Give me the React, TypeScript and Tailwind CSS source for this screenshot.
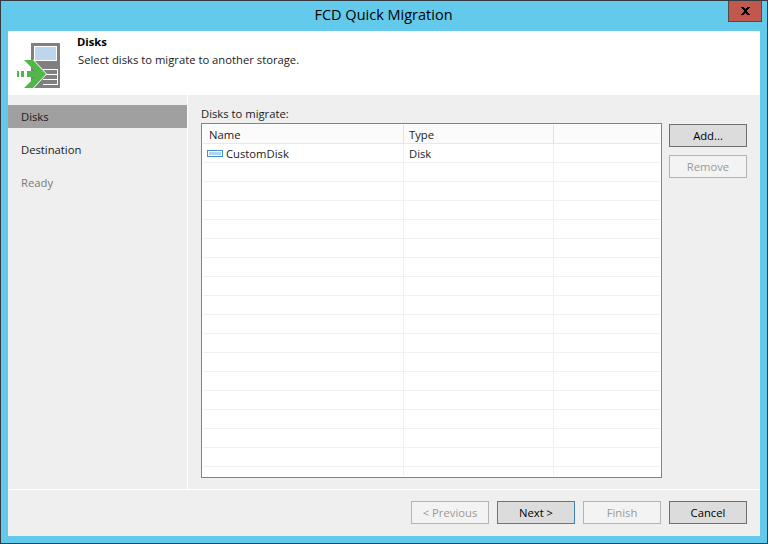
const ROWS = Array.from({ length: 18 });

function WizardIcon() {
  return (
    <svg width="44" height="46" viewBox="0 0 44 46" aria-hidden="true">
      <g shapeRendering="crispEdges">
        <rect x="14" y="0" width="29" height="45" fill="#808080" />
        <rect x="17.5" y="3.5" width="22" height="14" fill="#bdd6ee" stroke="#fff" />
        <path d="M26 26.5h14.5v5h-14.5M26 31.5h14.5v5h-14.5M26 36.5h14.5v5h-14.5" fill="none" stroke="#fff" />
      </g>
      <path d="M16 17 29 31 16 45" fill="none" stroke="#fff" strokeWidth="1.5" />
      <path d="M7 17h9L29 31 16 45H7l11-11h-8v-6h8z" fill="#50b848" />
      <g shapeRendering="crispEdges">
        <rect x="0" y="28" width="2" height="6" fill="#50b848" />
        <rect x="4" y="28" width="3" height="6" fill="#50b848" />
      </g>
    </svg>
  );
}

function DiskIcon() {
  return (
    <svg width="16" height="7" viewBox="0 0 16 7" shapeRendering="crispEdges" aria-hidden="true">
      <rect x="0.5" y="0.5" width="15" height="6" fill="#fff" stroke="#3e93d0" />
      <rect x="2" y="2" width="12" height="3" fill="#b5d3ec" />
    </svg>
  );
}

function CloseIcon() {
  return (
    <svg width="9" height="8" viewBox="0 0 9 8" shapeRendering="crispEdges" aria-hidden="true">
      <path d="M0 0h3v1h1v1h1V1h1V0h3v1H8v1H7v1H6v2h1v1h1v1h1v1H6V7H5V6H4v1H3v1H0V7h1V6h1V5h1V3H2V2H1V1H0z" fill="#000" />
    </svg>
  );
}

function Button({ label, disabled, focused }: { label: string; disabled?: boolean; focused?: boolean }) {
  const tone = disabled
    ? "border-[#b4b4b4] bg-[#f3f3f3] text-[#9a9a9a]"
    : focused
      ? "border-[#3f80b0] bg-[#dcdcdc] text-black"
      : "border-[#707070] bg-[#dcdcdc] text-black";
  return (
    <div className={`flex h-[23px] w-[78px] items-center justify-center border pt-[2px] ${tone}`}>{label}</div>
  );
}

export default function App() {
  return (
    <div
      className="flex h-[544px] w-[768px] flex-col overflow-hidden border border-[#333a40] bg-[#64caec] text-[11.25px] text-[#1a1a1a]"
      style={{ fontFamily: '"Open Sans", "Noto Sans", sans-serif' }}
    >
      <div className="flex h-[30px] shrink-0">
        <div className="flex-1 pl-[38px] pt-[3px] text-center text-[14.5px] leading-[22px] text-black">FCD Quick Migration</div>
        <div className="mr-[5px] flex h-[21px] w-[34px] items-center justify-center border border-t-0 border-[#4c4c4c] bg-[#c0584e]">
          <CloseIcon />
        </div>
      </div>

      <div className="mx-[7px] mb-[7px] flex min-h-0 flex-1 flex-col bg-[#efefef]">
        <div className="flex h-[64px] shrink-0 bg-white pl-[9px] pt-[12px]">
          <WizardIcon />
          <div className="-mt-[10px] ml-[16px]">
            <div className="font-bold leading-[18px] text-black">Disks</div>
            <div className="ml-[1px] leading-[18px]">Select disks to migrate to another storage.</div>
          </div>
        </div>

        <div className="flex min-h-0 flex-1 border-b border-white">
          <div className="w-[180px] shrink-0 border-r border-white pt-[10px]">
            <div className="flex h-[23px] w-[179px] items-center bg-[#a0a0a0] pl-[13px] pt-[2px]">Disks</div>
            <div className="mt-[10px] flex h-[23px] items-center pl-[13px] pt-[2px]">Destination</div>
            <div className="mt-[10px] flex h-[23px] items-center pl-[13px] pt-[2px] text-[#7a7a7a]">Ready</div>
          </div>

          <div className="flex min-w-0 flex-1 pl-[13px] pt-[8px]">
            <div className="w-[461px]">
              <div className="h-[20px] pt-[2px] leading-[18px]">Disks to migrate:</div>
              <div className="h-[355px] border border-[#82828c] bg-white p-[1px]">
                <div className="h-full overflow-hidden">
                  <div className="flex h-[19px] border-b border-[#e8e8e8] bg-[#fbfbfb]">
                    <div className="w-[201px] border-r border-[#e0e0e0] pl-[6px] leading-[19px]">Name</div>
                    <div className="w-[150px] border-r border-[#e0e0e0] pl-[5px] leading-[19px]">Type</div>
                  </div>
                  {ROWS.map((_, i) => (
                    <div key={i} className="flex h-[19px] border-b border-[#f0f0f0]">
                      <div className="flex w-[201px] items-center gap-[3px] border-r border-[#f0f0f0] pl-[4px]">
                        {i === 0 && <DiskIcon />}
                        {i === 0 && <span className="pt-[2px]">CustomDisk</span>}
                      </div>
                      <div className="flex w-[150px] items-center border-r border-[#f0f0f0] pl-[5px] pt-[2px]">
                        {i === 0 && "Disk"}
                      </div>
                    </div>
                  ))}
                </div>
              </div>
            </div>
            <div className="ml-[7px] flex flex-col gap-[8px] pt-[21px]">
              <Button label="Add..." />
              <Button label="Remove" disabled />
            </div>
          </div>
        </div>

        <div className="flex h-[46px] shrink-0 justify-end gap-[8px] pr-[13px] pt-[11px]">
          <Button label="< Previous" disabled />
          <Button label="Next >" focused />
          <Button label="Finish" disabled />
          <Button label="Cancel" />
        </div>
      </div>
    </div>
  );
}
